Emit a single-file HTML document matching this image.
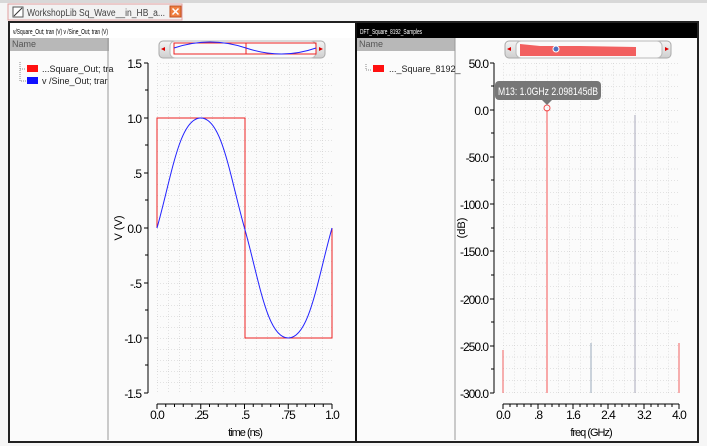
<!DOCTYPE html>
<html><head><meta charset="utf-8"><style>
body{margin:0;width:707px;height:446px;overflow:hidden;background:#fafafa;font-family:"Liberation Sans",sans-serif}
svg{display:block}
text{font-family:"Liberation Sans",sans-serif}
</style></head><body>
<svg width="707" height="446" viewBox="0 0 707 446" xmlns="http://www.w3.org/2000/svg">
<defs>
<pattern id="g" width="11" height="11" patternUnits="userSpaceOnUse" x="157" y="63">
<path d="M0 0V11M0 0H11" stroke="#c8c8c8" stroke-width="1" stroke-dasharray="1 2" fill="none"/>
</pattern>
<pattern id="g2" width="11" height="11.75" patternUnits="userSpaceOnUse" x="503" y="63">
<path d="M0 0V12M0 0H11" stroke="#c8c8c8" stroke-width="1" stroke-dasharray="1 2" fill="none"/>
</pattern>
<linearGradient id="sb" x1="0" y1="0" x2="0" y2="1"><stop offset="0" stop-color="#f4f4f4"/><stop offset="1" stop-color="#cfcfcf"/></linearGradient>
</defs>
<rect width="707" height="446" fill="#f6f6f6"/>
<rect x="0" y="0" width="707" height="3" fill="#d8d8d8"/>
<rect x="8" y="4" width="174" height="16" fill="#f2f2f2" stroke="#e3a0a0"/>
<rect x="13" y="7" width="10" height="10" fill="#fff" stroke="#555"/>
<path d="M14 16L22 8" stroke="#333"/>
<text x="27" y="16" font-size="10" fill="#444" textLength="138" lengthAdjust="spacingAndGlyphs">WorkshopLib Sq_Wave__in_HB_a...</text>
<rect x="170" y="6" width="11" height="11" fill="#f08040" stroke="#c05020"/>
<path d="M172.5 8.5l6 6M178.5 8.5l-6 6" stroke="#fff" stroke-width="1.5"/>
<rect x="9" y="22" width="689" height="420" fill="#fbfbfb" stroke="#222" stroke-width="2"/>
<rect x="10" y="23" width="345" height="15" fill="#fff"/>
<text x="13" y="34" font-size="7" fill="#000" textLength="95" lengthAdjust="spacingAndGlyphs">v/Square_Out; tran (V) v /Sine_Out; tran (V)</text>
<rect x="10" y="38" width="99" height="13" fill="#b8b8b8"/>
<text x="12" y="47" font-size="9" fill="#555">Name</text>
<line x1="108" y1="38" x2="108" y2="440" stroke="#999"/>
<path d="M20 62v19h6M20 69h6" stroke="#888" fill="none" stroke-dasharray="1 1"/>
<rect x="27" y="65" width="11" height="7" fill="#ff1010"/>
<text x="42" y="72" font-size="9" fill="#222">...Square_Out; tra</text>
<rect x="27" y="77" width="11" height="7" fill="#1010ff"/>
<text x="42" y="84" font-size="9" fill="#222">v /Sine_Out; trar</text>
<rect x="159" y="41" width="166" height="17" rx="4" fill="url(#sb)" stroke="#aaa"/>
<path d="M161 49l4-2v4z" fill="#d00"/><path d="M323 49l-4-2v4z" fill="#d00"/>
<rect x="170" y="41" width="146" height="17" rx="5" fill="#fafafa" stroke="#bbb"/>
<rect x="174" y="43" width="72" height="11" fill="none" stroke="#e22"/>
<rect x="246" y="43" width="70" height="11" fill="none" stroke="#e22"/>
<path d="M174 48Q210 36 246 48T316 48" stroke="#22f" fill="none"/>
<rect x="157" y="63" width="175" height="330" fill="url(#g)"/>
<line x1="148" y1="63" x2="148" y2="393" stroke="#000"/>
<g stroke="#000">
<path d="M144 63h4M144 118h4M144 173h4M144 228h4M144 283h4M144 338h4M144 393h4"/>
<path d="M145 90h3M145 145h3M145 200h3M145 255h3M145 310h3M145 365h3"/>
<line x1="157" y1="404" x2="332" y2="404"/>
<path d="M157 404v5M200.75 404v5M244.5 404v5M288.25 404v5M332 404v5"/>
<path d="M165.75 404v3M174.5 404v3M183.25 404v3M192 404v3M209.5 404v3M218.25 404v3M227 404v3M235.75 404v3M253.25 404v3M262 404v3M270.75 404v3M279.5 404v3M297 404v3M305.75 404v3M314.5 404v3M323.25 404v3"/>
</g>
<g font-size="12" fill="#000" text-anchor="end" letter-spacing="-1">
<text x="141" y="68">1.5</text><text x="141" y="123">1.0</text><text x="141" y="178">.5</text><text x="141" y="233">0.0</text><text x="141" y="288">-.5</text><text x="141" y="343">-1.0</text><text x="141" y="398">-1.5</text>
</g>
<g font-size="12" fill="#000" text-anchor="middle" letter-spacing="-1">
<text x="157" y="419">0.0</text><text x="201" y="419">.25</text><text x="245" y="419">.5</text><text x="288" y="419">.75</text><text x="332" y="419">1.0</text>
<text x="245" y="436" font-size="11">time (ns)</text>
</g>
<text x="0" y="0" font-size="11" transform="translate(122,228) rotate(-90)" text-anchor="middle">V (V)</text>
<path d="M157 228V118H245V338H332V228" stroke="#e22" fill="none"/>
<path d="M157 228C171.8 175.5 179.4 118 200.75 118C222 118 229.7 175.5 244.5 228C259.3 280.5 267 338 288.25 338C309.5 338 317.2 280.5 332 228" stroke="#22f" fill="none"/>
<rect x="355" y="23" width="2" height="418" fill="#111"/>
<rect x="357" y="23" width="340" height="15" fill="#000"/>
<text x="360" y="34" font-size="7" fill="#fff" textLength="62" lengthAdjust="spacingAndGlyphs">DFT_Square_8192_Samples</text>
<rect x="357" y="38" width="98" height="13" fill="#b8b8b8"/>
<text x="359" y="47" font-size="9" fill="#555">Name</text>
<line x1="455" y1="38" x2="455" y2="440" stroke="#999"/>
<path d="M366 64v6h6" stroke="#888" fill="none" stroke-dasharray="1 1"/>
<rect x="373" y="65" width="11" height="7" fill="#ff1010"/>
<text x="389" y="72" font-size="9" fill="#222">..._Square_8192_</text>
<rect x="505" y="41" width="166" height="17" rx="4" fill="url(#sb)" stroke="#aaa"/>
<path d="M507 49l4-2v4z" fill="#d00"/><path d="M669 49l-4-2v4z" fill="#d00"/>
<rect x="516" y="41" width="146" height="17" rx="5" fill="#fafafa" stroke="#bbb"/>
<path d="M520 44L540 46L580 46L636 47V56H520Z" fill="#f26060"/>
<circle cx="556" cy="49" r="3" fill="#5070c0" stroke="#fff"/>
<rect x="503" y="63" width="176" height="330" fill="url(#g2)"/>
<line x1="494" y1="63" x2="494" y2="393" stroke="#000"/>
<g stroke="#000">
<path d="M490 63h4M490 110h4M490 157h4M490 204h4M490 251h4M490 299h4M490 346h4M490 393h4"/>
<path d="M491 86h3M491 133h3M491 180h3M491 228h3M491 275h3M491 322h3M491 369h3"/>
<line x1="503" y1="404" x2="679" y2="404"/>
<path d="M503 404v5M538 404v5M573 404v5M608 404v5M644 404v5M679 404v5"/>
<path d="M510 404v3M517 404v3M524 404v3M531 404v3M545 404v3M552 404v3M559 404v3M566 404v3M580 404v3M587 404v3M594 404v3M601 404v3M615 404v3M622 404v3M629 404v3M636 404v3M651 404v3M658 404v3M665 404v3M672 404v3"/>
</g>
<g font-size="12" fill="#000" text-anchor="end" letter-spacing="-1">
<text x="488" y="68">50.0</text><text x="488" y="115">0.0</text><text x="488" y="162">-50.0</text><text x="488" y="209">-100.0</text><text x="488" y="256">-150.0</text><text x="488" y="304">-200.0</text><text x="488" y="351">-250.0</text><text x="488" y="398">-300.0</text>
</g>
<g font-size="12" fill="#000" text-anchor="middle" letter-spacing="-1">
<text x="503" y="419">0.0</text><text x="538" y="419">.8</text><text x="573" y="419">1.6</text><text x="608" y="419">2.4</text><text x="644" y="419">3.2</text><text x="679" y="419">4.0</text>
<text x="591" y="436" font-size="11">freq (GHz)</text>
</g>
<text x="0" y="0" font-size="11" transform="translate(465,228) rotate(-90)" text-anchor="middle">(dB)</text>
<g stroke="#f06060">
<path d="M503 350V393"/><path d="M547 110V393" stroke="#f8a8a8" stroke-width="2"/><path d="M591 343V393" stroke="#9ab"/><path d="M635 115V393" stroke="#aab"/><path d="M679 343V393"/>
</g>
<circle cx="547" cy="108" r="3" fill="none" stroke="#f05050"/>
<rect x="495" y="81" width="106" height="19" rx="4" fill="#777"/>
<path d="M542 100l5 5 5-5z" fill="#777"/>
<text x="498" y="95" font-size="11" fill="#fff" textLength="100" lengthAdjust="spacingAndGlyphs">M13: 1.0GHz 2.098145dB</text>
</svg>
</body></html>
